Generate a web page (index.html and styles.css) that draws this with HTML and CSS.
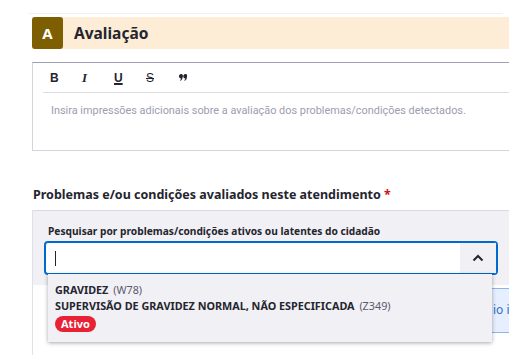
FILE: index.html
```html
<!DOCTYPE html>
<html lang="pt-BR">
<head>
<meta charset="utf-8">
<link rel="stylesheet" href="styles.css">
</head>
<body>
<div class="page">
  <div class="top-rule"></div>
  <section class="section">
    <header class="sec-head">
      <span class="badge-letter">A</span>
      <h2 class="sec-title">Avaliação</h2>
    </header>
    <div class="editor">
      <div class="toolbar">
        <span class="tb tb-b">B</span>
        <span class="tb tb-i">I</span>
        <span class="tb tb-u">U</span>
        <span class="tb tb-s">S</span>
        <span class="tb tb-q"><svg width="8" height="7" viewBox="0 0 8 7"><path d="M0 2a2 2 0 1 1 3.6 1.2c0 1.6-.9 3-2.3 3.6l-.4-.7c.7-.4 1.2-1 1.2-1.7A2 2 0 0 1 0 2z M4.3 2a2 2 0 1 1 3.6 1.2c0 1.6-.9 3-2.3 3.6l-.4-.7c.7-.4 1.2-1 1.2-1.7A2 2 0 0 1 4.3 2z" fill="#24252e"/></svg></span>
      </div>
      <div class="placeholder">Insira impressões adicionais sobre a avaliação dos problemas/condições detectados.</div>
    </div>

    <div class="field-label">Problemas e/ou condições avaliados neste atendimento <span class="req">*</span></div>
    <div class="panel">
      <div class="panel-head">
        <label class="search-label">Pesquisar por problemas/condições ativos ou latentes do cidadão</label>
        <div class="combo">
          <div class="combo-input"><span class="caret"></span></div>
          <div class="combo-btn">
            <svg width="14" height="14" viewBox="0 0 14 14"><path d="M2.5 9.5 L7 5 L11.5 9.5" fill="none" stroke="#24252e" stroke-width="2"/></svg>
          </div>
          <div class="dropdown">
            <div class="opt"><b>GRAVIDEZ</b> <span class="code">(W78)</span></div>
            <div class="opt"><b>SUPERVISÃO DE GRAVIDEZ NORMAL, NÃO ESPECIFICADA</b> <span class="code">(Z349)</span></div>
            <span class="pill">Ativo</span>
          </div>
        </div>
      </div>
      <div class="panel-body">
        <div class="info-box">io in</div>
      </div>
    </div>
  </section>
</div>
</body>
</html>
```
FILE: styles.css
```css
* { box-sizing: border-box; }
html, body { margin: 0; padding: 0; background: #fff; }
body { font-family: "Noto Sans", "Roboto", sans-serif; color: #24252e; overflow: hidden; height: 358px; }
.page { padding-top: 13px; }
.top-rule { margin-left: 29px; width: 474px; height: 1px; background: #f0f0f2; }
.section { margin-left: 32px; width: 477px; }
.sec-head { margin-top: 3px; height: 32px; display: flex; align-items: center; background: #fdedd6; }
.badge-letter { width: 31px; height: 32px; background: #7d5e00; color: #fff; border-radius: 3px; display: flex; align-items: center; justify-content: center; font-weight: 700; font-size: 15px; }
.sec-title { margin: 0 0 0 11px; font-size: 15.5px; font-weight: 700; color: #24252e; }
.editor { margin-top: 13px; height: 89px; border: 1px solid #d4d4de; border-top-color: #9e9eb6; border-right: none; }
.toolbar { margin-left: 10px; height: 30px; border-bottom: 1px solid #dcdce4; display: flex; align-items: center; padding-left: 7px; }
.tb { width: 32px; font-size: 12px; font-weight: 700; color: #24252e; font-family: "Liberation Sans", sans-serif; line-height: 1; }
.tb-i { font-family: "Liberation Serif", serif; font-style: italic; font-size: 13px; font-weight: 700; }
.tb-u { text-decoration: underline; text-decoration-thickness: 1.5px; text-underline-offset: 1px; }
.tb-s { text-decoration: line-through; font-weight: 400; }
.tb-q { display: flex; align-items: center; padding-left: 1px; }
.placeholder { margin: 11px 0 0 18px; font-family: "Roboto", sans-serif; font-size: 10.9px; color: #9d9daf; }
.field-label { margin-top: 35px; font-size: 12.5px; font-weight: 700; color: #24252e; padding-left: 1px; }
.req { color: #d0101b; }
.panel { margin-top: 7px; border-left: 1px solid #e0e0e8; }
.panel-head { background: #f0f0f5; border-top: 1px solid #d9d9e3; padding: 13px 12px 11px 12px; }
.search-label { display: block; font-size: 10.2px; font-weight: 700; color: #24252e; margin-left: 3px; }
.combo { position: relative; margin-top: 4px; height: 32px; border: 1px solid #0069d0; box-shadow: 0 0 0 1px #0069d0; border-radius: 3px; display: flex; background: #fff; }
.combo-input { flex: 1; display: flex; align-items: center; padding-left: 9px; }
.caret { width: 1px; height: 15px; background: #24252e; }
.combo-btn { width: 36px; background: #f0f0f5; display: flex; align-items: center; justify-content: center; }
.dropdown { position: absolute; left: 2px; right: 4px; top: 31px; background: #f0f0f5; box-shadow: 0 1px 4px rgba(0,0,0,.35); padding: 8px 7px 10px 7px; z-index: 2; }
.opt { font-size: 10.8px; line-height: 16px; color: #24252e; }
.opt b { font-weight: 700; }
.code { color: #5a5a6e; margin-left: 2px; }
.pill { display: block; width: fit-content; margin-top: 2px; background: #e82235; color: #fff; font-size: 11px; font-weight: 700; height: 16px; line-height: 16px; padding: 0 6px; border-radius: 8px; }
.panel-body { background: #fff; height: 70px; padding-top: 3px; display: flex; justify-content: flex-end; }
.info-box { width: 18px; height: 45px; background: #e6efff; border: 1px solid #8fb4ea; border-right: none; color: #2c6fc7; font-size: 12px; white-space: nowrap; overflow: hidden; padding: 12px 0 0 1px; }
```
